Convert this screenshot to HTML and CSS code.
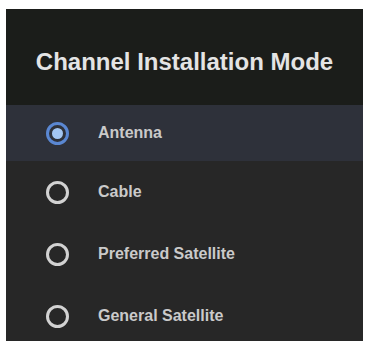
FILE: index.html
```html
<!DOCTYPE html>
<html>
<head>
<meta charset="utf-8">
<link rel="stylesheet" href="styles.css">
</head>
<body>
<div class="panel">
  <div class="header">
    <h1 class="title">Channel Installation Mode</h1>
  </div>
  <div class="list">
    <div class="row row-first selected">
      <span class="radio checked"><span class="dot"></span></span>
      <span class="label">Antenna</span>
    </div>
    <div class="row">
      <span class="radio"></span>
      <span class="label">Cable</span>
    </div>
    <div class="row">
      <span class="radio"></span>
      <span class="label">Preferred Satellite</span>
    </div>
    <div class="row">
      <span class="radio"></span>
      <span class="label">General Satellite</span>
    </div>
  </div>
</div>
</body>
</html>
```
FILE: styles.css
```css
html, body {
  margin: 0;
  padding: 0;
  background: #ffffff;
}
body {
  padding: 9px 5px 4px 6px;
  font-family: "Liberation Sans", Arial, sans-serif;
}
.panel {
  width: 357px;
  height: 332px;
  background: #272727;
  overflow: hidden;
  display: flex;
  flex-direction: column;
}
.header {
  height: 96px;
  flex: none;
  background: #1b1d1a;
  display: flex;
  align-items: center;
  justify-content: center;
}
.title {
  margin: 0;
  padding-top: 9px;
  font-size: 24px;
  font-weight: bold;
  color: #e4e4e4;
}
.list {
  display: flex;
  flex-direction: column;
}
.row {
  height: 62px;
  flex: none;
  display: flex;
  align-items: center;
  padding-left: 40px;
  gap: 29px;
}
.row-first {
  height: 56px;
}
.selected {
  background: #2e313a;
}
.radio {
  width: 23px;
  height: 23px;
  box-sizing: border-box;
  border: 3px solid #d2d2d2;
  border-radius: 50%;
  display: flex;
  align-items: center;
  justify-content: center;
  flex: none;
}
.radio.checked {
  border-color: #5a87d2;
}
.dot {
  width: 11px;
  height: 11px;
  border-radius: 50%;
  background: #a3c6f2;
}
.label {
  font-size: 16px;
  font-weight: bold;
  color: #cacaca;
}
```
